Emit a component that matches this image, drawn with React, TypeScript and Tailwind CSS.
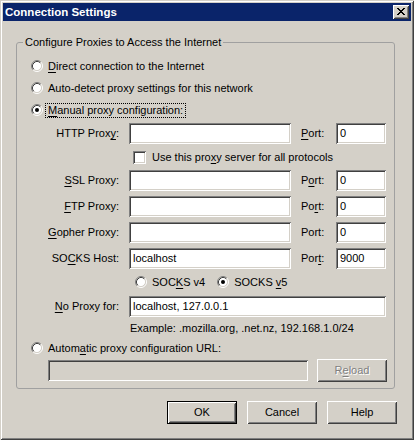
import React from "react";

const raised =
  "shadow-[inset_1px_1px_#ffffff,inset_-1px_-1px_#404040,inset_2px_2px_#d4d0c8,inset_-2px_-2px_#808080]";
const sunken =
  "shadow-[inset_1px_1px_#808080,inset_-1px_-1px_#ffffff,inset_2px_2px_#404040,inset_-2px_-2px_#d4d0c8]";

function Radio({ checked }: { checked?: boolean }) {
  return (
    <svg width="12" height="12" viewBox="0 0 12 12" className="shrink-0">
      <circle cx="6" cy="6" r="4.5" fill="#ffffff" />
      <path d="M2.11 9.89 A5.5 5.5 0 0 1 9.89 2.11" fill="none" stroke="#808080" strokeWidth="1" />
      <path d="M9.89 2.11 A5.5 5.5 0 0 1 2.11 9.89" fill="none" stroke="#ffffff" strokeWidth="1" />
      <path d="M2.82 9.18 A4.5 4.5 0 0 1 9.18 2.82" fill="none" stroke="#404040" strokeWidth="1" />
      <path d="M9.18 2.82 A4.5 4.5 0 0 1 2.82 9.18" fill="none" stroke="#d4d0c8" strokeWidth="1" />
      {checked && <circle cx="6" cy="6" r="2" fill="#000000" />}
    </svg>
  );
}

function Check() {
  return <div className={`w-[13px] h-[13px] shrink-0 bg-white ${sunken}`} />;
}

function RLabel({ children, focus }: { children: React.ReactNode; focus?: boolean }) {
  return (
    <span
      className={`ml-[2px] px-[2px] leading-[13px] border border-dotted ${
        focus ? "border-black" : "border-transparent"
      }`}
    >
      {children}
    </span>
  );
}

function U({ children }: { children: React.ReactNode }) {
  return <span className="underline underline-offset-[2px]">{children}</span>;
}

function Field({ w, value, disabled }: { w: string; value?: string; disabled?: boolean }) {
  return (
    <div
      className={`${w} h-[21px] shrink-0 flex items-center pl-[4px] ${sunken} ${
        disabled ? "bg-[#d4d0c8]" : "bg-white"
      }`}
    >
      {value}
    </div>
  );
}

function ProxyRow({
  label,
  port,
  value,
  portValue,
  cls,
}: {
  label: React.ReactNode;
  port: React.ReactNode;
  value?: string;
  portValue: string;
  cls?: string;
}) {
  return (
    <div className={`flex items-center h-[21px] ${cls ?? ""}`}>
      <div className="w-[98px] pr-[10px] text-right shrink-0">{label}</div>
      <Field w="w-[162px]" value={value} />
      <div className="w-[35px] ml-[10px] shrink-0">{port}</div>
      <Field w="w-[50px]" value={portValue} />
    </div>
  );
}

function Button({
  children,
  isDefault,
  disabled,
}: {
  children: React.ReactNode;
  isDefault?: boolean;
  disabled?: boolean;
}) {
  if (isDefault) {
    return (
      <div className="w-[70px] h-[23px] border border-black bg-[#d4d0c8] shrink-0">
        <div className={`w-full h-full flex items-center justify-center ${raised}`}>{children}</div>
      </div>
    );
  }
  return (
    <div
      className={`w-[70px] h-[23px] shrink-0 flex items-center justify-center bg-[#d4d0c8] ${raised} ${
        disabled ? "text-[#808080] [text-shadow:1px_1px_0_#ffffff]" : ""
      }`}
    >
      {children}
    </div>
  );
}

export default function App() {
  return (
    <div className="w-[414px] h-[440px] font-['Liberation_Sans',Arial,sans-serif] text-[11px] text-black">
      <div
        className={`w-[414px] h-[440px] bg-[#d4d0c8] p-[3px] flex flex-col shadow-[inset_1px_1px_#d4d0c8,inset_-1px_-1px_#404040,inset_2px_2px_#ffffff,inset_-2px_-2px_#808080]`}
      >
        {/* caption */}
        <div className="h-[18px] bg-[#0a246a] flex items-center justify-between pl-[2px] pr-[2px] shrink-0">
          <span className="text-white font-bold text-[11.5px] leading-[14px]">Connection Settings</span>
          <div className={`w-[16px] h-[14px] bg-[#d4d0c8] ${raised} flex items-start pl-[4px] pt-[3px]`}>
            <svg width="8" height="7" viewBox="0 0 8 7" shapeRendering="crispEdges">
              <path
                d="M0 0h2v1H0zM6 0h2v1H6zM1 1h2v1H1zM5 1h2v1H5zM2 2h4v1H2zM3 3h2v1H3zM2 4h4v1H2zM1 5h2v1H1zM5 5h2v1H5zM0 6h2v1H0zM6 6h2v1H6z"
                fill="#000000"
              />
            </svg>
          </div>
        </div>

        {/* body */}
        <div className="flex flex-col px-[13px] pt-[21px]">
          <div className="relative w-[379px] border border-[#a0a0a0] rounded-[3px] pt-[12px] pl-[14px] pr-[8px] pb-[6px]">
            <span className="absolute left-[6px] -top-[7px] px-[2px] bg-[#d4d0c8] leading-[13px]">
              Configure Proxies to Access the Internet
            </span>

            <div className="flex items-center h-[22px]">
              <Radio />
              <RLabel>
                <U>D</U>irect connection to the Internet
              </RLabel>
            </div>
            <div className="flex items-center h-[22px]">
              <Radio />
              <RLabel>Auto-detect proxy settings for this network</RLabel>
            </div>
            <div className="flex items-center h-[22px]">
              <Radio checked />
              <RLabel focus>
                <U>M</U>anual proxy configuration:
              </RLabel>
            </div>

            <ProxyRow
              cls="mt-[2px]"
              label={
                <>
                  HTTP Prox<U>y</U>:
                </>
              }
              port={
                <>
                  <U>P</U>ort:
                </>
              }
              portValue="0"
            />

            <div className="flex items-center h-[26px] pl-[102px]">
              <Check />
              <span className="ml-[6px]">
                Use this pro<U>x</U>y server for all protocols
              </span>
            </div>

            <ProxyRow
              label={
                <>
                  <U>S</U>SL Proxy:
                </>
              }
              port={
                <>
                  P<U>o</U>rt:
                </>
              }
              portValue="0"
            />
            <ProxyRow
              cls="mt-[5px]"
              label={
                <>
                  <U>F</U>TP Proxy:
                </>
              }
              port={
                <>
                  Po<U>r</U>t:
                </>
              }
              portValue="0"
            />
            <ProxyRow
              cls="mt-[5px]"
              label={
                <>
                  <U>G</U>opher Proxy:
                </>
              }
              port={<>Port:</>}
              portValue="0"
            />
            <ProxyRow
              cls="mt-[5px]"
              label={
                <>
                  SO<U>C</U>KS Host:
                </>
              }
              port={
                <>
                  Por<U>t</U>:
                </>
              }
              value="localhost"
              portValue="9000"
            />

            <div className="flex items-center h-[22px] mt-[2px] pl-[104px]">
              <Radio />
              <RLabel>
                SOC<U>K</U>S v4
              </RLabel>
              <div className="ml-[9px] flex items-center">
                <Radio checked />
                <RLabel>
                  SOCKS <U>v</U>5
                </RLabel>
              </div>
            </div>

            <div className="flex items-center h-[21px] mt-[3px]">
              <div className="w-[98px] pr-[10px] text-right shrink-0">
                <U>N</U>o Proxy for:
              </div>
              <Field w="w-[257px]" value="localhost, 127.0.0.1" />
            </div>

            <div className="flex items-center h-[22px] pl-[99px]">
              Example: .mozilla.org, .net.nz, 192.168.1.0/24
            </div>

            <div className="flex items-center h-[18px]">
              <Radio />
              <RLabel>
                Autom<U>a</U>tic proxy configuration URL:
              </RLabel>
            </div>

            <div className="flex items-center h-[23px] mt-[2px] pl-[17px]">
              <Field w="w-[260px]" disabled />
              <div className="ml-[9px]">
                <Button disabled>
                  R<U>e</U>load
                </Button>
              </div>
            </div>
          </div>

          <div className="flex justify-end gap-[10px] mt-[12px] w-[381px]">
            <Button isDefault>OK</Button>
            <Button>Cancel</Button>
            <Button>Help</Button>
          </div>
        </div>
      </div>
    </div>
  );
}
